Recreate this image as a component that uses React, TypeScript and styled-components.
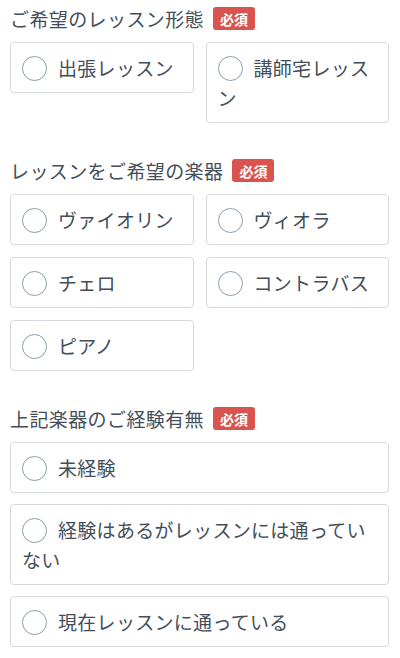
import React from 'react';
import styled, { createGlobalStyle } from 'styled-components';

const GlobalStyle = createGlobalStyle`
  html, body {
    margin: 0;
    padding: 0;
    background: #ffffff;
  }
  body {
    font-family: "Noto Sans CJK JP", "Noto Sans", sans-serif;
    color: #3e4a55;
  }
`;

type Section = {
  title: string;
  columns: 1 | 2;
  options: string[];
};

const sections: Section[] = [
  {
    title: 'ご希望のレッスン形態',
    columns: 2,
    options: ['出張レッスン', '講師宅レッスン'],
  },
  {
    title: 'レッスンをご希望の楽器',
    columns: 2,
    options: ['ヴァイオリン', 'ヴィオラ', 'チェロ', 'コントラバス', 'ピアノ'],
  },
  {
    title: '上記楽器のご経験有無',
    columns: 1,
    options: ['未経験', '経験はあるがレッスンには通っていない', '現在レッスンに通っている'],
  },
];

export default function App() {
  return (
    <>
      <GlobalStyle />
      <Page>
        {sections.map((section) => (
          <Fieldset key={section.title}>
            <Legend>
              <LegendText>{section.title}</LegendText>
              <Required>必須</Required>
            </Legend>
            <OptionGrid columns={section.columns}>
              {section.options.map((option) => (
                <Option key={option}>
                  <Radio />
                  {option}
                </Option>
              ))}
            </OptionGrid>
          </Fieldset>
        ))}
      </Page>
    </>
  );
}

const Page = styled.div`
  display: flex;
  flex-direction: column;
  gap: 36px;
  padding: 7px 11px 0 10px;
`;

const Fieldset = styled.section`
  display: flex;
  flex-direction: column;
  gap: 12px;
`;

const Legend = styled.div`
  display: flex;
  align-items: center;
  gap: 9px;
  height: 23px;
`;

const LegendText = styled.span`
  font-size: 19px;
  letter-spacing: 0.4px;
  line-height: 23px;
  color: #434e59;
`;

const Required = styled.span`
  display: inline-flex;
  align-items: center;
  justify-content: center;
  height: 23px;
  padding: 0 7px;
  border-radius: 3px;
  background: #d9534f;
  color: #ffffff;
  font-size: 14px;
  font-weight: 700;
`;

const OptionGrid = styled.div<{ columns: number }>`
  display: grid;
  grid-template-columns: repeat(${(p) => p.columns}, 1fr);
  align-items: start;
  column-gap: 12px;
  row-gap: ${(p) => (p.columns === 1 ? 11 : 12)}px;
`;

const Option = styled.label`
  display: block;
  padding: 9.5px 13px 9.5px 11px;
  border: 1px solid #d6d9dc;
  border-radius: 4px;
  font-size: 19px;
  letter-spacing: 0.3px;
  line-height: 30px;
  color: #434e59;
  background: #ffffff;
`;

const Radio = styled.span`
  display: inline-block;
  box-sizing: border-box;
  width: 25px;
  height: 25px;
  margin-right: 11px;
  vertical-align: -5px;
  border: 1.5px solid #8c9dab;
  border-radius: 50%;
  background: #ffffff;
`;
